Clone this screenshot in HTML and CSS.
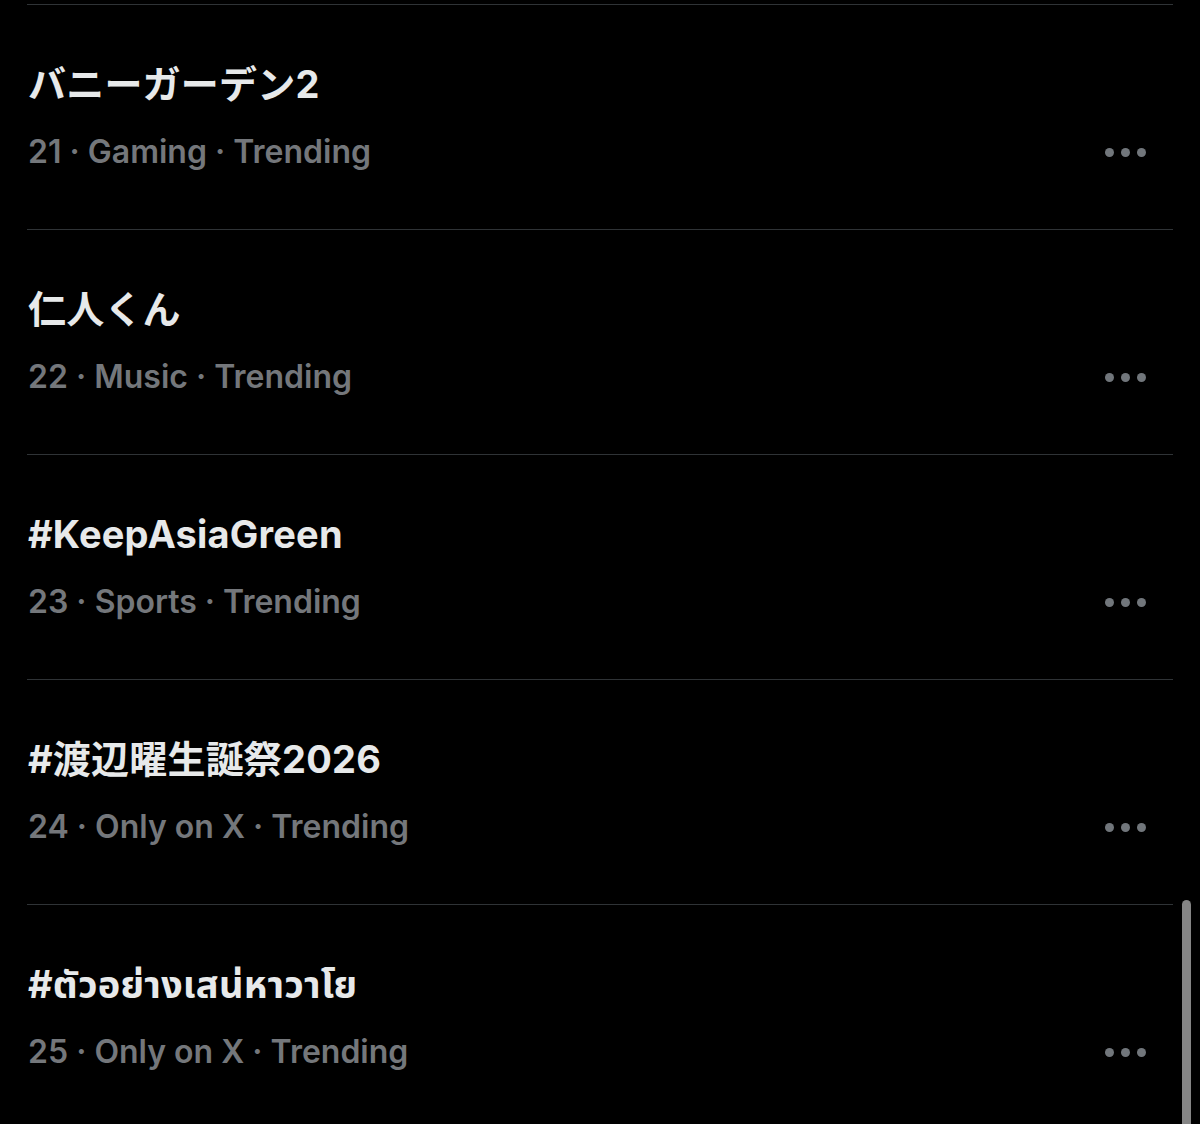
FILE: index.html
```html
<!DOCTYPE html>
<html lang="ja">
<head>
<meta charset="utf-8">
<link rel="stylesheet" href="styles.css">
</head>
<body>
<main class="list">
  <div class="top-edge"></div>
  <section class="trend">
    <div class="info">
      <div class="title">バニーガーデン2</div>
      <div class="meta">21 · Gaming · Trending</div>
    </div>
    <div class="more"><span></span><span></span><span></span></div>
  </section>
  <section class="trend">
    <div class="info">
      <div class="title">仁人くん</div>
      <div class="meta">22 · Music · Trending</div>
    </div>
    <div class="more"><span></span><span></span><span></span></div>
  </section>
  <section class="trend">
    <div class="info">
      <div class="title">#KeepAsiaGreen</div>
      <div class="meta">23 · Sports · Trending</div>
    </div>
    <div class="more"><span></span><span></span><span></span></div>
  </section>
  <section class="trend">
    <div class="info">
      <div class="title">#渡辺曜生誕祭2026</div>
      <div class="meta">24 · Only on X · Trending</div>
    </div>
    <div class="more"><span></span><span></span><span></span></div>
  </section>
  <section class="trend">
    <div class="info">
      <div class="title" lang="th">#ตัวอย่างเสน่หาวาโย</div>
      <div class="meta">25 · Only on X · Trending</div>
    </div>
    <div class="more"><span></span><span></span><span></span></div>
  </section>
</main>
<div class="scrollbar"></div>
</body>
</html>
```

FILE: styles.css
```css
html, body {
  margin: 0;
  padding: 0;
  background: #000;
  height: 1124px;
  overflow: hidden;
}
body {
  font-family: Inter, "Noto Sans CJK JP", "Noto Sans Thai", "DejaVu Sans", sans-serif;
  color: #e7e9ea;
  position: relative;
}
.list {
  padding: 0 27px;
}
.top-edge {
  height: 4px;
}
.trend {
  border-top: 1px solid #2f3336;
  height: 224px;
  display: flex;
  align-items: flex-start;
  justify-content: space-between;
}
.info {
  padding-top: 56px;
  padding-left: 1px;
}
.title {
  font-size: 38px;
  line-height: 46px;
  font-weight: 700;
  letter-spacing: 0.2px;
  color: #e7e9ea;
}
.meta {
  margin-top: 23px;
  font-size: 32px;
  line-height: 44px;
  font-weight: 600;
  color: #74777b;
}
.more {
  display: flex;
  gap: 7px;
  margin-top: 143px;
  margin-right: 27px;
}
.more span {
  width: 9px;
  height: 9px;
  border-radius: 50%;
  background: #71767b;
}
.scrollbar {
  position: absolute;
  left: 1182px;
  top: 900px;
  width: 9px;
  height: 240px;
  border-radius: 5px;
  background: #858585;
}
```
